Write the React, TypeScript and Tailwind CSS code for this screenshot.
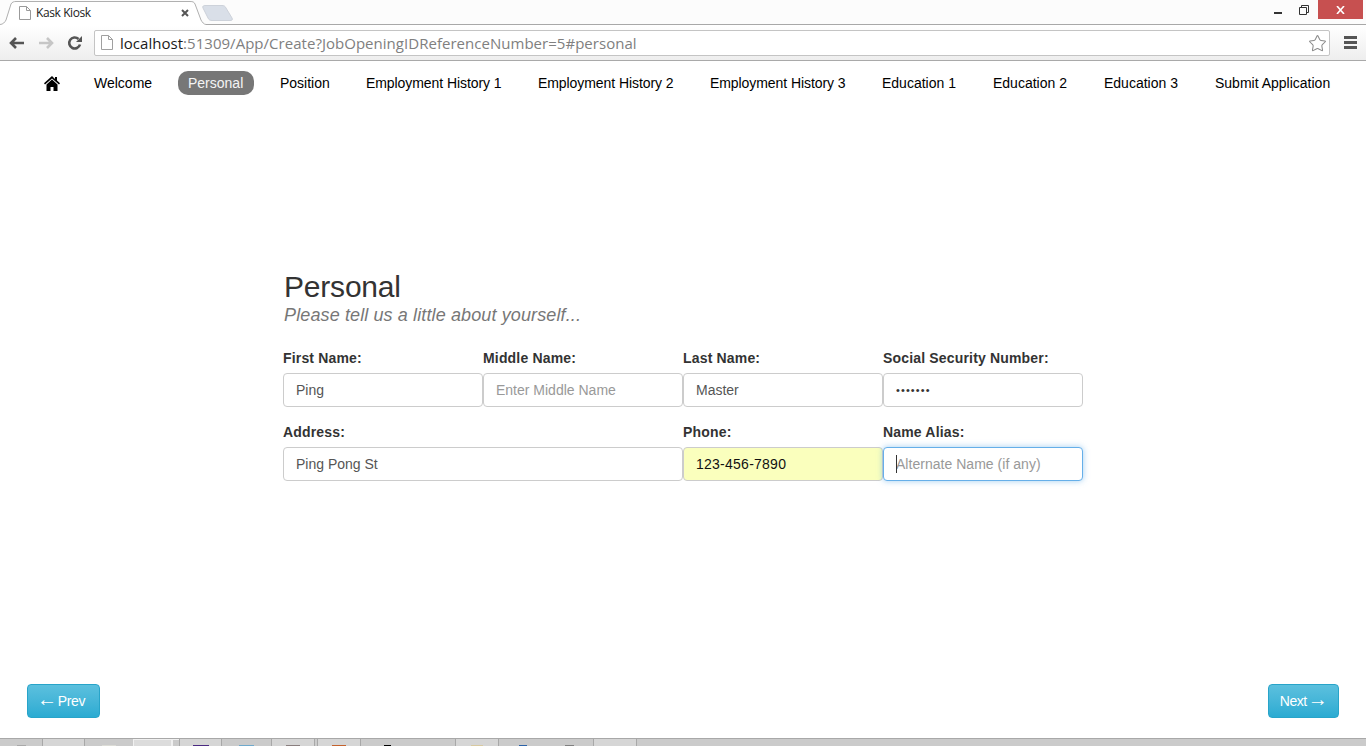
import { Star } from "lucide-react";

const navItems = [
  { label: "Welcome", w: "w-[78px]" },
  { label: "Personal", w: "w-[76px]" },
  { label: "Position", w: "w-[70px]" },
  { label: "Employment History 1", w: "w-[156px] tracking-[-0.07px]" },
  { label: "Employment History 2", w: "w-[156px] tracking-[-0.07px]" },
  { label: "Employment History 3", w: "w-[156px] tracking-[-0.07px]" },
  { label: "Education 1", w: "w-[95px]" },
  { label: "Education 2", w: "w-[95px]" },
  { label: "Education 3", w: "w-[95px]" },
  { label: "Submit Application", w: "w-[136px]" },
];

// taskbar is cut off by the window, only the top of each button shows
const taskItems = [
  { w: "w-[42px]", box: "", icon: "w-[9px] bg-[#a9a9a9]" },
  { w: "w-[43px]", box: "bg-[#d6d6d6] border-x border-[#a8a8a8]", icon: "" },
  { w: "w-[48px]", box: "", icon: "w-[14px] bg-[#dcdcd6]" },
  { w: "w-[39px]", box: "bg-[#dcdcdc] border-x border-t border-[#f0f0f0]", icon: "" },
  { w: "w-[7px]", box: "border-l border-t border-[#f0f0f0]", icon: "" },
  { w: "w-[43px]", box: "bg-[#d6d6d6] border-x border-[#a8a8a8]", icon: "w-[16px] bg-[#4b2a82]" },
  { w: "w-[49px]", box: "", icon: "w-[15px] bg-[#6fa9cc]" },
  { w: "w-[44px] mr-[2px]", box: "bg-[#d6d6d6] border-x border-[#a8a8a8]", icon: "w-[14px] bg-[#8a7f7f]" },
  { w: "w-[44px]", box: "bg-[#d6d6d6] border-x border-[#a8a8a8]", icon: "w-[14px] bg-[#c4622d]" },
  { w: "w-[52px]", box: "", icon: "w-[7px] bg-black" },
  { w: "w-[42px]", box: "", icon: "" },
  { w: "w-[44px]", box: "bg-[#d6d6d6] border-x border-[#a8a8a8]", icon: "w-[12px] bg-[#d8c9a0]" },
  { w: "w-[47px]", box: "", icon: "w-[8px] bg-[#2b62a8]" },
  { w: "w-[47px]", box: "", icon: "w-[9px] bg-[#808080]" },
  { w: "w-[44px]", box: "bg-[#d6d6d6] border-x border-[#a8a8a8]", icon: "" },
];

function BrowserChrome() {
  return (
    <div className="h-[61px] shrink-0 border-b border-[#a9a9a9]">
      <div className="h-[25px] relative border-b border-[#a8a8a8] bg-[#fcfcfc] flex justify-end items-start">
        <svg className="absolute left-0 top-0" width="236" height="25" viewBox="0 0 236 25">
          <path d="M0 25V24C3 24 5 22 6 20L11 4C12 2 14 1 16 1H190C193 1 194 2 195 4L201 20C202 22 204 24 206 24V25Z" fill="#fff" />
          <path d="M0 24.5C3 24.5 5 22 6 20L11 4C12 2 14 1.500 16 1.500H190C193 1.500 194 2 195 4L201 20C202 22 204 24.500 206 24.500" fill="none" stroke="#b0b0b0" />
          <path d="M203 8C202 6 204 5.500 205 5.500H222C224 5.500 225 6 226 8L232 18C233 20 232 20.500 230 20.500H212C210 20.500 209 20 208 18Z" fill="#d9dfe8" stroke="#cdd2da" />
        </svg>
        <div className="absolute left-[19px] top-[6px]">
          <svg width="12" height="14" viewBox="0 0 12 14">
            <path d="M.5.5h7l4 4v9H.5z" fill="#fff" stroke="#9a9a9a" />
            <path d="M7.500.5v4h4" fill="none" stroke="#9a9a9a" />
          </svg>
        </div>
        <span className="absolute left-[36px] top-[6px] text-[12px] leading-[14px] text-[#222] tracking-[-0.4px] font-['Open_Sans',sans-serif]">Kask Kiosk</span>
        <span className="absolute left-[181px] top-[9px]">
          <svg width="8" height="8" viewBox="0 0 8 8">
            <path d="M1 1l6 6M7 1L1 7" stroke="#555" strokeWidth="2" />
          </svg>
        </span>
        <span className="w-[30px] h-[19px] flex items-center justify-center">
          <span className="w-[8px] h-[2px] bg-[#333] mt-[7px] ml-[10px]" />
        </span>
        <span className="w-[30px] h-[19px] flex items-center justify-center">
          <svg className="ml-[2px]" width="10" height="10" viewBox="0 0 10 10">
            <path d="M.5 2.500h7v7h-7zM2.500 2.500v-2h7v7h-2" fill="none" stroke="#333" />
          </svg>
        </span>
        <span className="w-[45px] h-[19px] bg-[#c75050] flex items-center justify-center mr-[3px]">
          <svg width="9" height="8" viewBox="0 0 9 8">
            <path d="M1 0l7 8M8 0L1 8" stroke="#fff" strokeWidth="1.6" />
          </svg>
        </span>
      </div>
      <div className="h-[35px] flex items-center bg-gradient-to-b from-[#ffffff] to-[#eeeeee]">
        <span className="ml-[9px] w-[16px] flex justify-center">
          <svg width="16" height="14" viewBox="0 0 16 14">
            <path d="M7 2L2 7l5 5M2.500 7H15" fill="none" stroke="#555" strokeWidth="2.600" />
          </svg>
        </span>
        <span className="ml-[13px] w-[16px] flex justify-center">
          <svg width="16" height="14" viewBox="0 0 16 14">
            <path d="M9 2l5 5-5 5M13.500 7H1" fill="none" stroke="#c6c6c6" strokeWidth="2.600" />
          </svg>
        </span>
        <span className="ml-[13px] w-[16px] flex justify-center">
          <svg width="16" height="16" viewBox="0 0 16 16">
            <path d="M13 9.500A5.500 5.500 0 1 1 11.500 4" fill="none" stroke="#555" strokeWidth="2.600" />
            <path d="M9 7h6V1z" fill="#555" />
          </svg>
        </span>
        <div className="ml-[11px] w-[1236px] h-[26px] bg-white border border-[#c4c4c4] rounded-[2px] flex items-center relative">
          <svg className="ml-[6px]" width="12" height="15" viewBox="0 0 12 15">
            <path d="M.5.5h7l4 4v10H.5z" fill="#fff" stroke="#a0a0a0" />
            <path d="M7.500.5v4h4" fill="none" stroke="#a0a0a0" />
          </svg>
          <span className="ml-[7px] text-[15px] leading-[24px] tracking-[0.03px] whitespace-nowrap font-['Open_Sans',sans-serif] text-[#808080]">
            <span className="text-[#1a1a1a]">localhost</span>:51309/App/Create?JobOpeningIDReferenceNumber=5#personal
          </span>
          <Star className="absolute right-[2px] top-[3px] text-[#8a8a8a]" size={19} strokeWidth={1.3} />
        </div>
        <div className="ml-[14px] flex flex-col gap-[2px]">
          <span className="w-[13px] h-[3px] bg-[#555]" />
          <span className="w-[13px] h-[3px] bg-[#555]" />
          <span className="w-[13px] h-[3px] bg-[#555]" />
        </div>
      </div>
    </div>
  );
}

function Nav() {
  return (
    <nav className="h-[44px] shrink-0 pt-[10px] pl-[34px] flex items-start gap-[16px] text-[14px] leading-[24px] text-black">
      <a className="w-[34px] h-[24px] flex items-center justify-center pl-[2px]">
        <svg width="16" height="15" viewBox="0 0 16 15">
          <path d="M8 0L0 7.200l1 1.200L8 2.400l7 6 1-1.200-3-2.600V1h-2v1.900z" fill="#000" />
          <path d="M8 3.600L2.500 8.400V15H6.500v-4h3v4h4V8.400z" fill="#000" />
        </svg>
      </a>
      {navItems.map((item) => (
        <a
          key={item.label}
          className={
            item.label === "Personal"
              ? item.w + " h-[24px] pl-[10px] rounded-[10px] bg-[#777] text-[#f4f4f4] whitespace-nowrap"
              : item.w + " h-[24px] pl-[10px] whitespace-nowrap"
          }
        >
          {item.label}
        </a>
      ))}
    </nav>
  );
}

function Field({
  label,
  value,
  placeholder,
  className,
  inputClass,
  caret,
}: {
  label: string;
  value?: string;
  placeholder?: string;
  className?: string;
  inputClass?: string;
  caret?: boolean;
}) {
  return (
    <div className={className}>
      <label className="block h-[25px] text-[14px] leading-[20px] font-bold text-[#333] whitespace-nowrap tracking-[0.17px]">{label}</label>
      <div className="relative">
        <input
          readOnly
          value={value ?? ""}
          placeholder={placeholder}
          className={
            "block w-full h-[34px] px-[12px] border rounded-[4px] outline-none placeholder:text-[#999] " +
            (inputClass ?? "bg-white border-[#ccc] text-[#555] text-[14px]")
          }
        />
        {caret && <span className="absolute left-[13px] top-[8px] w-px h-[18px] bg-[#333]" />}
      </div>
    </div>
  );
}

export default function App() {
  return (
    <div className="h-[746px] flex flex-col bg-white overflow-hidden font-['Liberation_Sans',Arial,sans-serif]">
      <BrowserChrome />
      <Nav />
      <main className="flex-1 pt-[165px] pl-[283px]">
        <div className="w-[800px]">
          <h1 className="text-[30px] leading-[33px] text-[#333] tracking-[-0.2px] pl-px">Personal</h1>
          <p className="text-[18px] leading-[24px] italic text-[#777] tracking-[0.12px] pl-px">Please tell us a little about yourself...</p>
          <div className="mt-[21px] grid grid-cols-4 gap-y-[15px]">
            <Field label="First Name:" value="Ping" />
            <Field label="Middle Name:" placeholder="Enter Middle Name" />
            <Field label="Last Name:" value="Master" />
            <Field
              label="Social Security Number:"
              value="•••••••"
              inputClass="bg-white border-[#ccc] text-[#333] text-[11px] tracking-[1.1px]"
            />
            <Field label="Address:" value="Ping Pong St" className="col-span-2" />
            <Field
              label="Phone:"
              value="123-456-7890"
              inputClass="bg-[#faffbd] border-[#ccc] text-[#111] text-[14px] tracking-[0.25px]"
            />
            <Field
              label="Name Alias:"
              placeholder="Alternate Name (if any)"
              caret
              inputClass="bg-white border-[#66afe9] text-[14px] tracking-[0.03px] shadow-[0_0_6px_rgba(102,175,233,0.6)]"
            />
          </div>
        </div>
      </main>
      <div className="shrink-0 h-[54px] px-[27px] flex justify-between items-start">
        <button className="h-[34px] w-[73px] pl-[9px] rounded-[4px] border border-[#28a4c9] bg-gradient-to-b from-[#5bc0de] to-[#2aabd2] text-white text-[14px] tracking-[-0.3px] flex items-center gap-[1px]">
          <span className="text-[20px] leading-[18px] mb-[5px]">←</span>
          <span>Prev</span>
        </button>
        <button className="h-[34px] w-[71px] rounded-[4px] border border-[#28a4c9] bg-gradient-to-b from-[#5bc0de] to-[#2aabd2] text-white text-[14px] tracking-[-0.5px] flex items-center justify-center gap-[1px]">
          <span>Next</span>
          <span className="text-[20px] leading-[18px] mb-[5px]">→</span>
        </button>
      </div>
      <div className="h-[8px] shrink-0 bg-[#cbcbcb] border-t border-[#a8a8a8] flex overflow-hidden">
        {taskItems.map((t, i) => (
          <div key={i} className={t.w + " h-[8px] flex justify-center " + t.box}>
            {t.icon && <span className={t.icon + " h-[2px] mt-[6px]"} />}
          </div>
        ))}
      </div>
    </div>
  );
}
